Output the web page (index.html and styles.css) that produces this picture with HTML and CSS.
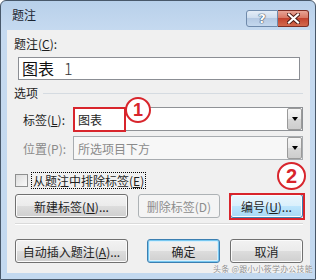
FILE: index.html
```html
<!DOCTYPE html>
<html lang="zh-CN">
<head>
    <meta charset="UTF-8">
    <title>题注</title>
    <link rel="stylesheet" href="styles.css">
</head>
<body>
    <div class="window">
        <div class="titlebar">
            <span class="title">题注</span>
            <div class="controls">
                <span class="ctl help">?</span>
                <span class="ctl close">
                    <svg width="13" height="11" viewBox="0 0 13 11">
                        <path d="M2 1.5 L11 9.5 M11 1.5 L2 9.5" stroke="#4a1a14" stroke-width="4" stroke-linecap="square"/>
                        <path d="M2 1.5 L11 9.5 M11 1.5 L2 9.5" stroke="#ffffff" stroke-width="2.2" stroke-linecap="square"/>
                    </svg>
                </span>
            </div>
        </div>

        <div class="content">
            <div class="caption-label">题注(<u>C</u>):</div>
            <div class="textbox">图表<span class="num">1</span></div>

            <div class="group">
                <span>选项</span>
                <i class="rule"></i>
            </div>

            <div class="row">
                <span class="field-label">标签(<u>L</u>):</span>
                <div class="combo">
                    <span>图表</span>
                    <b class="drop"><i></i></b>
                </div>
            </div>

            <div class="row disabled">
                <span class="field-label">位置(P):</span>
                <div class="combo">
                    <span>所选项目下方</span>
                    <b class="drop"><i></i></b>
                </div>
            </div>

            <div class="check">
                <span class="box"></span>
                <span class="focus">从题注中排除标签(<u>E</u>)</span>
            </div>

            <div class="buttons">
                <button class="btn wide">新建标签(<u>N</u>)...</button>
                <button class="btn mid" disabled>删除标签(D)</button>
                <button class="btn hover">编号(<u>U</u>)...</button>
            </div>

            <div class="sep"></div>

            <div class="buttons">
                <button class="btn wide">自动插入题注(<u>A</u>)...</button>
                <button class="btn default">确定</button>
                <button class="btn">取消</button>
            </div>
        </div>

        <!-- annotations drawn over the dialog -->
        <div class="mark mark-label"></div>
        <div class="mark mark-number"></div>
        <div class="badge badge-1">1</div>
        <div class="badge badge-2">2</div>
        <div class="watermark">头条 @跟小小筱学办公技能</div>
    </div>
</body>
</html>
```

FILE: styles.css
```css
body {
    margin: 0;
    background: #ffffff;
    font-family: "Noto Sans CJK SC", "Liberation Sans", sans-serif;
    font-size: 12px;
    color: #1e1e1e;
}
.window {
    position: relative;
    width: 316px;
    height: 280px;
    box-sizing: border-box;
    border: 1px solid #48586a;
    border-radius: 6px 6px 0 0;
    background: linear-gradient(#b8d0ea, #c6daf0 30px, #c3d9f0);
    display: flex;
    flex-direction: column;
}
.titlebar {
    height: 29px;
    display: flex;
    align-items: flex-start;
    justify-content: space-between;
}
.title {
    margin: 6px 0 0 11px;
    line-height: 16px;
    color: #1b2430;
}
.controls {
    display: flex;
    margin: 9px 6px 0 0;
}
.ctl {
    height: 17px;
    box-sizing: border-box;
    display: flex;
    align-items: center;
    justify-content: center;
}
.help {
    width: 32px;
    border: 1px solid #6f8aab;
    border-radius: 3px 0 0 3px;
    background: linear-gradient(#e4edf7, #ccdcee 50%, #b4c9e3 50%, #c4d8ee);
    font-family: "DejaVu Sans", sans-serif;
    font-weight: bold;
    font-size: 13px;
    color: #ffffff;
    text-shadow: 0 0 1px #33475f, 0 0 1px #33475f, 0 0 1px #33475f;
}
.close {
    width: 31px;
    border: 1px solid #7c2d24;
    border-left: none;
    border-radius: 0 3px 3px 0;
    background: linear-gradient(#e8a597, #d7735f 50%, #c3432f 50%, #d26a4f);
}
.content {
    flex: 1;
    margin: 0 5px 6px 6px;
    background: #f0f0f0;
    padding: 0 7px 0 8px;
    display: flex;
    flex-direction: column;
}
.caption-label {
    margin: 6px 0 0 -1px;
    line-height: 16px;
}
.textbox {
    margin: 5px 3px 0 3px;
    height: 23px;
    box-sizing: border-box;
    border: 1px solid #8b8e94;
    background: #ffffff;
    padding-left: 3px;
    font-size: 16px;
    line-height: 21px;
    color: #111;
}
.textbox .num {
    margin-left: 10px;
    font-weight: 300;
    color: #333;
}
.group {
    margin: 5px 0 0 -1px;
    display: flex;
    align-items: center;
    line-height: 16px;
}
.rule {
    flex: 1;
    height: 1px;
    margin: 0 0 0 5px;
    background: #d5dbe1;
}
.row {
    margin-top: 6px;
    display: flex;
    align-items: center;
}
.row + .row {
    margin-top: 5px;
}
.field-label {
    width: 58px;
    padding-left: 8px;
    box-sizing: border-box;
}
.combo {
    flex: 1;
    height: 24px;
    box-sizing: border-box;
    border: 1px solid #8f9296;
    background: #ffffff;
    display: flex;
    align-items: center;
    justify-content: space-between;
    padding-left: 4px;
}
.drop {
    width: 15px;
    height: 22px;
    box-sizing: border-box;
    border: 1px solid #9a9a9a;
    border-radius: 2px;
    background: linear-gradient(#f6f6f6, #e8e8e8 50%, #d8d8d8 50%, #cdcdcd);
    display: flex;
    align-items: center;
    justify-content: center;
}
.drop i {
    width: 0;
    height: 0;
    border-left: 3.5px solid transparent;
    border-right: 3.5px solid transparent;
    border-top: 4px solid #000;
}
.disabled .field-label,
.disabled .combo span {
    color: #8a8a8a;
}
.disabled .combo {
    background: #f7f7f7;
    border-color: #a8acb0;
}
.check {
    margin-top: 12px;
    height: 17px;
    display: flex;
    align-items: center;
}
.box {
    width: 13px;
    height: 13px;
    box-sizing: border-box;
    border: 1px solid #8e8f8f;
    background: linear-gradient(135deg, #dcdcdc, #fafafa);
    margin-right: 3px;
}
.focus {
    height: 17px;
    box-sizing: border-box;
    border: 1px dotted #000;
    padding: 0 1px;
    line-height: 15px;
}
.buttons {
    margin-top: 5px;
    display: flex;
    gap: 10px;
}
.sep + .buttons {
    margin-top: 14px;
}
.btn {
    width: 73px;
    height: 24px;
    box-sizing: border-box;
    border: 1px solid #707070;
    border-radius: 3px;
    background: linear-gradient(#f2f2f2, #ebebeb 50%, #dddddd 50%, #cfcfcf);
    box-shadow: inset 0 0 0 1px #fbfbfb;
    font-family: inherit;
    font-size: 12px;
    color: #1e1e1e;
    padding: 0;
}
.btn.wide {
    width: 113px;
}
.btn.mid {
    width: 82px;
}
.buttons .btn.default {
    margin-left: 9px;
    border-color: #3c7fb1;
    box-shadow: inset 0 0 0 1px #76c7f0, inset 0 0 0 2px #d8eefa;
}
.btn.hover {
    border-color: #3c7fb1;
    background: linear-gradient(#eaf6fd, #d9f0fc 50%, #bee6fd 50%, #a7d9f5);
}
.btn:disabled {
    border-color: #adb2b5;
    background: #f4f4f4;
    box-shadow: none;
    color: #8d8d8d;
}
.sep {
    margin-top: 5px;
    height: 1px;
    background: #dadada;
    border-bottom: 1px solid #ffffff;
}
.mark {
    position: absolute;
    box-sizing: border-box;
    border: 2px solid #d8252c;
}
.mark-label {
    left: 72px;
    top: 106px;
    width: 53px;
    height: 25px;
}
.mark-number {
    left: 228px;
    top: 192px;
    width: 76px;
    height: 27px;
}
.badge {
    position: absolute;
    box-sizing: border-box;
    border: 2px solid #d8252c;
    border-radius: 50%;
    background: #ffffff;
    color: #d8252c;
    font-family: "Liberation Sans", sans-serif;
    font-weight: bold;
    display: flex;
    align-items: center;
    justify-content: center;
}
.badge-1 {
    left: 124px;
    top: 96px;
    width: 26px;
    height: 26px;
    font-size: 18px;
}
.badge-2 {
    left: 276px;
    top: 161px;
    width: 29px;
    height: 28px;
    font-size: 20px;
}
.watermark {
    position: absolute;
    left: 212px;
    top: 262px;
    font-size: 8px;
    line-height: 11px;
    letter-spacing: 0.2px;
    color: #8c8c8c;
    text-shadow: 0 0 1px #fff, 0 0 1px #fff;
    white-space: nowrap;
}
```
